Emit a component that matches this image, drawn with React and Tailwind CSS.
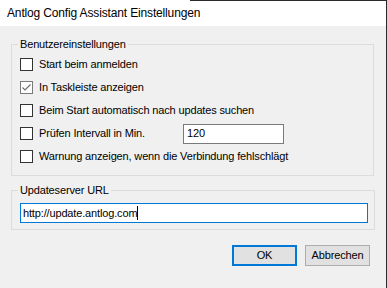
import React from "react";

const CheckBox = ({ checked = false }) => (
  <span
    className={`w-[13px] h-[13px] shrink-0 bg-white border flex items-center justify-center ${
      checked ? "border-[#7a7a7a]" : "border-[#333333]"
    }`}
  >
    {checked && (
      <svg width="11" height="11" viewBox="0 0 11 11">
        <path d="M1.5 5.5 L4 8 L9.5 2.5" fill="none" stroke="#6f6f6f" strokeWidth="1.2" />
      </svg>
    )}
  </span>
);

const CheckRow = ({ label, checked, children }) => (
  <div className="h-[23px] flex items-center">
    <CheckBox checked={checked} />
    <span className="ml-[6px] w-[144px] whitespace-nowrap">{label}</span>
    {children}
  </div>
);

const Btn = ({ label, primary }) => (
  <div
    className={`w-[65px] h-[21px] bg-[#e1e1e1] flex items-center justify-center ${
      primary ? "border-2 border-[#0078d7]" : "border border-[#adadad]"
    }`}
  >
    {label}
  </div>
);

export default function App() {
  return (
    <div className="w-[387px] h-[288px] bg-[#f0f0f0] border-r border-[#2b2b2b] text-black font-['Liberation_Sans',Arial,sans-serif] text-[11px] leading-[13px] tracking-[-0.15px] flex flex-col overflow-hidden">
      {/* title bar */}
      <div className="h-[26px] bg-white shrink-0 flex flex-col">
        <div className="ml-[190px] h-px bg-[#2b2b2b]" />
        <div className="pl-[7px] text-[12px] leading-[25px]">Antlog Config Assistant Einstellungen</div>
      </div>

      <div className="pl-[11px] flex flex-col">
        <fieldset className="mt-[12px] w-[363px] h-[138px] border border-[#dcdcdc] px-[6px] pb-[7px]">
          <legend className="px-[2px] leading-[13px]">Benutzereinstellungen</legend>
          <div className="ml-[2px] mt-[2px] flex flex-col">
            <CheckRow label="Start beim anmelden" />
            <CheckRow label="In Taskleiste anzeigen" checked />
            <CheckRow label="Beim Start automatisch nach updates suchen" />
            <CheckRow label="Prüfen Intervall in Min.">
              <div className="w-[101px] h-[20px] bg-white border border-[#7a7a7a] flex items-center pl-[3px]">120</div>
            </CheckRow>
            <CheckRow label="Warnung anzeigen, wenn die Verbindung fehlschlägt" />
          </div>
        </fieldset>

        <fieldset className="mt-[8px] w-[363px] h-[46px] border border-[#dcdcdc] px-[6px]">
          <legend className="px-[2px] leading-[13px]">Updateserver URL</legend>
          <div className="ml-[2px] mt-[6px] w-[348px] h-[20px] bg-white border border-[#0078d7] flex items-center pl-[2px]">
            <span>http://update.antlog.com</span>
            <span className="w-px h-[14px] bg-black" />
          </div>
        </fieldset>

        <div className="mt-[15px] w-[359px] flex justify-end gap-[8px]">
          <Btn label="OK" primary />
          <Btn label="Abbrechen" />
        </div>
      </div>
    </div>
  );
}
